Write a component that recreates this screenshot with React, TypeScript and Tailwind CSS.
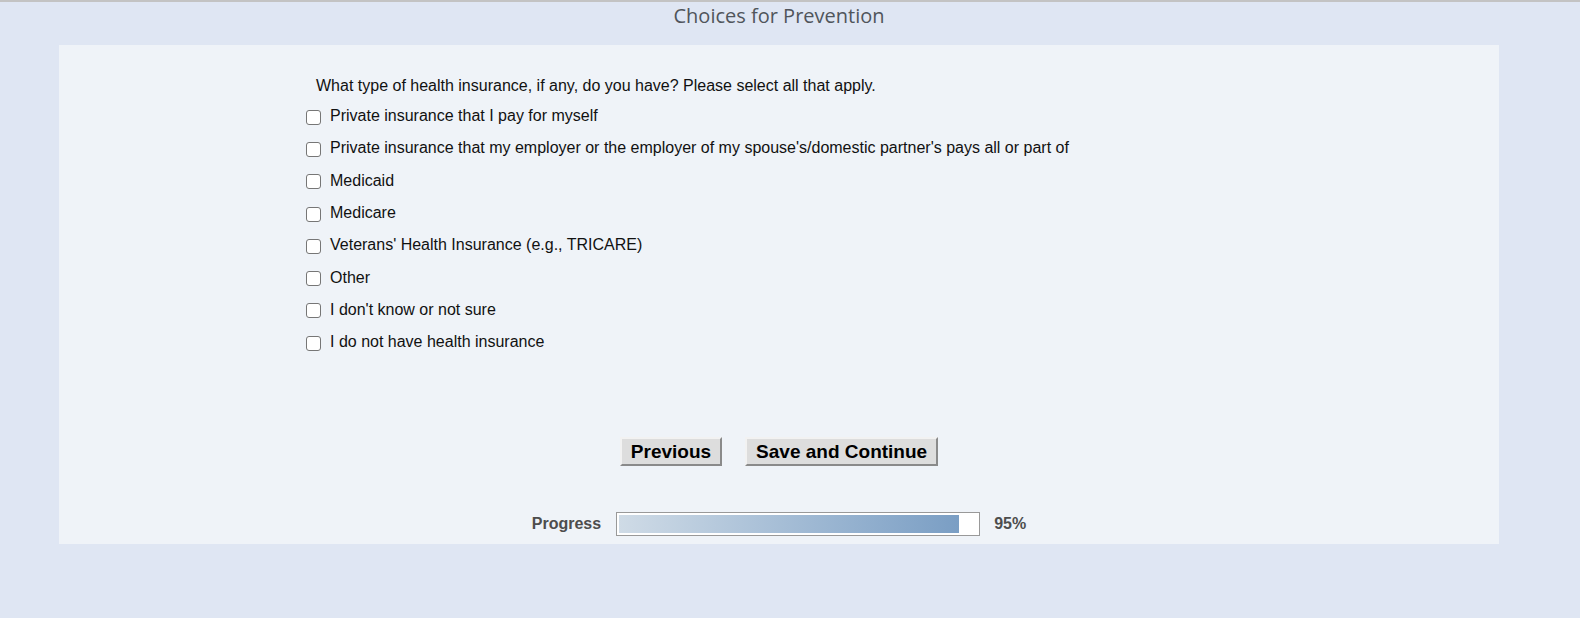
import React from "react";

const options = [
  "Private insurance that I pay for myself",
  "Private insurance that my employer or the employer of my spouse's/domestic partner's pays all or part of",
  "Medicaid",
  "Medicare",
  "Veterans' Health Insurance (e.g., TRICARE)",
  "Other",
  "I don't know or not sure",
  "I do not have health insurance",
];

export default function App() {
  return (
    <div className="min-h-[618px] bg-[#dfe6f3] border-t-2 border-[#c3c3c3] font-['Liberation_Sans',Arial,sans-serif]">
      <div className="w-[1440px] ml-[59px]">
        <h1 className="text-center text-[20px] leading-[27px] text-[#50555b] font-['Open_Sans',sans-serif]">
          Choices for Prevention
        </h1>
        <div className="mt-[16px] bg-[#eff3f8] h-[499px] flex flex-col">
          <div className="pl-[247px] pt-[32px]">
            <p className="pl-[10px] text-[16px] leading-[18px] text-[#111]">
              What type of health insurance, if any, do you have? Please select all that apply.
            </p>
            <div className="mt-[5px] flex flex-col">
              {options.map((o) => (
                <label key={o} className="flex items-center h-[32.3px] text-[16px] text-[#111]">
                  <input
                    type="checkbox"
                    className="appearance-none m-0 w-[15px] h-[15px] border border-[#767676] rounded-[3px] bg-white mt-[2px]"
                  />
                  <span className="ml-[9px]">{o}</span>
                </label>
              ))}
            </div>
          </div>
          <div className="mt-[79px] flex justify-center gap-[23px]">
            <button className="h-[29px] px-[9px] bg-[#dddddd] border-2 border-t-[#f2f2f2] border-l-[#f2f2f2] border-b-[#8a8a8a] border-r-[#8a8a8a] text-[19px] font-bold leading-[22px] text-black">
              Previous
            </button>
            <button className="h-[29px] px-[9px] bg-[#dddddd] border-2 border-t-[#f2f2f2] border-l-[#f2f2f2] border-b-[#8a8a8a] border-r-[#8a8a8a] text-[19px] font-bold leading-[22px] text-black">
              Save and Continue
            </button>
          </div>
          <div className="mt-[46px] flex items-center justify-center">
            <span className="text-[16px] font-bold text-[#4d4d4d]">Progress</span>
            <div className="ml-[15px] w-[364px] h-[24px] border border-[#999] bg-white p-[2px]">
              <div
                className="h-full bg-gradient-to-r from-[#cfdbe6] to-[#7a9ec4]"
                style={{ width: "95%" }}
              />
            </div>
            <span className="ml-[14px] text-[16px] font-bold text-[#4d4d4d]">95%</span>
          </div>
        </div>
      </div>
    </div>
  );
}
